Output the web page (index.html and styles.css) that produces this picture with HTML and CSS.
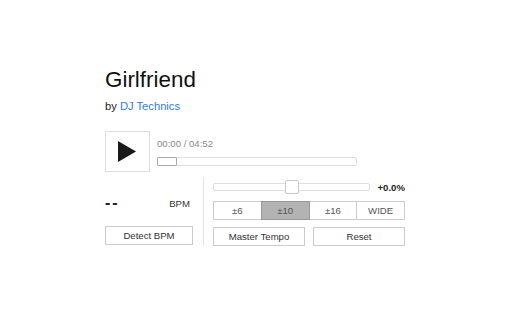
FILE: index.html
```html
<!DOCTYPE html>
<html lang="en">
<head>
  <meta charset="UTF-8">
  <meta name="viewport" content="width=device-width, initial-scale=1.0">
  <title>Girlfriend - DJ Technics</title>
  <link rel="stylesheet" href="styles.css">
</head>
<body>
  <div class="player">
    <!-- Track info -->
    <h1 class="title">Girlfriend</h1>
    <div class="byline">by <a href="#" class="artist">DJ Technics</a></div>

    <!-- Transport -->
    <div class="transport">
      <button class="play-button" aria-label="Play">
        <svg width="18" height="21" viewBox="0 0 18 21"><polygon points="0,0 18,10.5 0,21" fill="#1a1a1a"/></svg>
      </button>
      <div class="track">
        <span class="time">00:00 / 04:52</span>
        <div class="progress">
          <div class="progress-thumb"></div>
        </div>
      </div>
    </div>

    <!-- Controls -->
    <div class="controls">
      <div class="bpm-panel">
        <div class="bpm-readout">
          <span class="bpm-value">--</span>
          <span class="bpm-label">BPM</span>
        </div>
        <button class="btn">Detect BPM</button>
      </div>
      <div class="tempo-panel">
        <div class="pitch-row">
          <div class="pitch-slider">
            <div class="pitch-thumb"></div>
          </div>
          <span class="pitch-value">+0.0%</span>
        </div>
        <div class="range-group">
          <button class="range-btn">±6</button>
          <button class="range-btn active">±10</button>
          <button class="range-btn">±16</button>
          <button class="range-btn">WIDE</button>
        </div>
        <div class="tempo-actions">
          <button class="btn">Master Tempo</button>
          <button class="btn">Reset</button>
        </div>
      </div>
    </div>
  </div>
</body>
</html>
```

FILE: styles.css
```css
body {
  font-family: 'Liberation Sans', Arial, sans-serif;
  margin: 0;
  padding: 0;
  background: #fff;
  color: #222;
}

.player {
  width: 300px;
  padding: 67px 0 0 105px;
}

/* Track info */
.title {
  font-size: 22.4px;
  font-weight: 400;
  line-height: 25px;
  margin: 0;
  color: #111;
}

.byline {
  font-size: 11.2px;
  line-height: 13px;
  margin-top: 8px;
  color: #222;
}

.artist {
  color: #2b7de0;
  text-decoration: none;
}

/* Transport */
.transport {
  display: flex;
  gap: 7px;
  margin-top: 18px;
}

.play-button {
  width: 45px;
  height: 41px;
  padding: 0;
  border: 1px solid #ddd;
  background: #fff;
  display: flex;
  align-items: center;
  justify-content: center;
  cursor: pointer;
}

.play-button svg {
  margin-left: -2px;
}

.track {
  width: 200px;
  padding-top: 7px;
  display: flex;
  flex-direction: column;
}

.time {
  font-size: 9.6px;
  line-height: 11px;
  color: #8a8a8a;
}

.progress {
  margin-top: 8px;
  height: 9px;
  border: 1px solid #ddd;
  border-radius: 2px;
  box-sizing: border-box;
  position: relative;
}

.progress-thumb {
  position: absolute;
  left: -1px;
  top: -1px;
  width: 20px;
  height: 9px;
  box-sizing: border-box;
  border: 1px solid #aaa;
  border-radius: 1px;
  background: #fff;
}

/* Controls */
.controls {
  display: flex;
  margin-top: 5px;
}

.bpm-panel {
  width: 88px;
  padding-right: 10px;
  border-right: 1px solid #e2e2e2;
  display: flex;
  flex-direction: column;
  justify-content: space-between;
  padding-bottom: 1px;
}

.bpm-readout {
  display: flex;
  justify-content: space-between;
  align-items: center;
  padding: 17px 3px 0 0;
}

.bpm-value {
  font-size: 16px;
  font-weight: 700;
  letter-spacing: 2px;
  color: #222;
}

.bpm-label {
  font-size: 9.6px;
  color: #333;
}

.tempo-panel {
  width: 192px;
  padding-left: 9px;
  display: flex;
  flex-direction: column;
  gap: 7px;
}

.pitch-row {
  display: flex;
  align-items: center;
  margin-top: 3px;
  height: 14px;
}

.pitch-slider {
  width: 157px;
  height: 8px;
  border: 1px solid #ddd;
  border-radius: 2px;
  box-sizing: border-box;
  position: relative;
}

.pitch-thumb {
  position: absolute;
  left: 71px;
  top: -4px;
  width: 14px;
  height: 14px;
  box-sizing: border-box;
  border: 1px solid #c8c8c8;
  border-radius: 2px;
  background: #fff;
}

.pitch-value {
  margin-left: auto;
  font-size: 9.6px;
  font-weight: 700;
  color: #222;
}

.range-group {
  display: flex;
}

.range-btn {
  flex: 1;
  height: 19px;
  padding: 0;
  font-family: inherit;
  font-size: 9.6px;
  font-weight: 400;
  color: #555;
  background: #fff;
  border: 1px solid #ccc;
  margin-left: -1px;
}

.range-btn:first-child {
  margin-left: 0;
}

.range-btn.active {
  background: #b3b3b3;
  border-color: #999;
  position: relative;
}

.btn {
  height: 19px;
  padding: 0;
  font-family: inherit;
  font-size: 9.6px;
  font-weight: 400;
  color: #333;
  background: #fff;
  border: 1px solid #ccc;
  cursor: pointer;
}

.tempo-actions {
  display: flex;
  gap: 8px;
}

.tempo-actions .btn {
  flex: 1;
}
```
